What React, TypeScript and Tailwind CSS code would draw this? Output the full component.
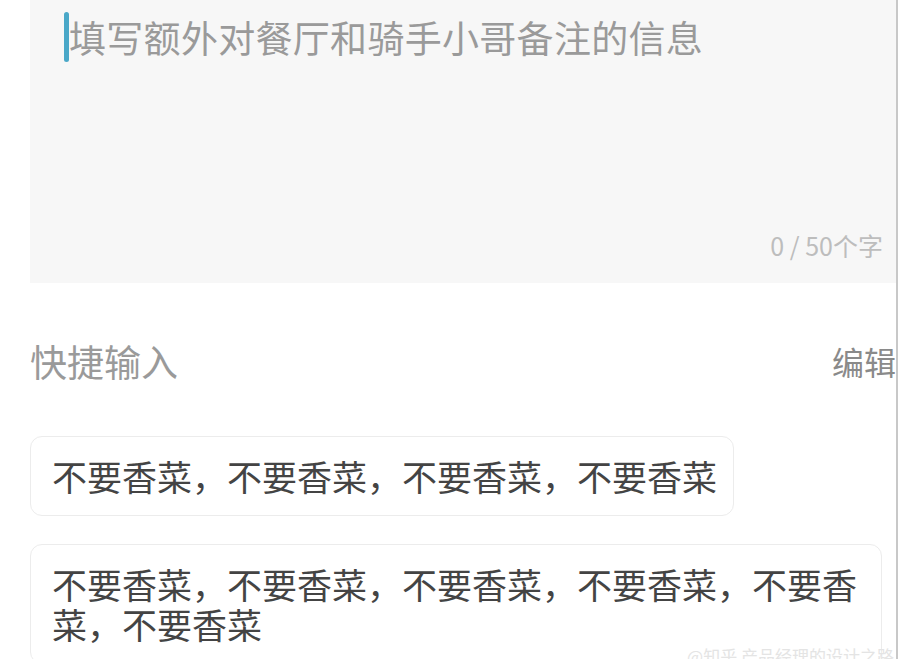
const quickItems = [
  '不要香菜，不要香菜，不要香菜，不要香菜',
  '不要香菜，不要香菜，不要香菜，不要香菜，不要香菜，不要香菜',
];

export default function App() {
  return (
    <div
      className="relative flex w-[900px] h-[659px] overflow-hidden bg-white"
      style={{ fontFamily: '"Noto Sans CJK SC", "Noto Sans", sans-serif' }}
    >
      <div className="flex w-[896px] shrink-0 flex-col pl-[30px]">
        {/* 备注输入框 */}
        <div className="flex h-[283px] shrink-0 flex-col bg-[#f7f7f7] pl-[34px] pt-[12px]">
          <div className="flex h-[50px] items-center">
            <span className="h-[50px] w-[5px] rounded-sm bg-[#4aa8c8]" />
            <span className="text-[37px] leading-none tracking-[0.3px] text-[#9a9a9a]">
              填写额外对餐厅和骑手小哥备注的信息
            </span>
          </div>
          <div className="mt-auto self-end pb-[25px] pr-[13px] text-[25px] leading-none text-[#bdbdbd]">
            0 / 50个字
          </div>
        </div>

        {/* 快捷输入 */}
        <div className="mt-[53px] flex h-[50px] shrink-0 items-center justify-between">
          <span className="text-[37px] leading-none text-[#9a9a9a]">快捷输入</span>
          <span className="text-[32px] leading-none text-[#8a8a8a]">编辑</span>
        </div>

        <div className="mt-[50px] flex shrink-0 flex-col items-start gap-[28px]">
          {quickItems.map((item) => (
            <div
              key={item}
              className="max-w-[852px] shrink-0 rounded-[12px] border border-[#ececec] bg-white py-[19px] pl-[21px] pr-[16px] text-[35px] leading-[40px] text-[#444444]"
            >
              {item}
            </div>
          ))}
        </div>
      </div>

      {/* 右侧边线 */}
      <div className="h-full w-[2px] shrink-0 bg-[#c8c8c8]" />

      {/* 水印 */}
      <div className="absolute bottom-[-9px] right-[6px] text-[17px] text-[#e4e4e4]">
        @知乎 产品经理的设计之路
      </div>
    </div>
  );
}
